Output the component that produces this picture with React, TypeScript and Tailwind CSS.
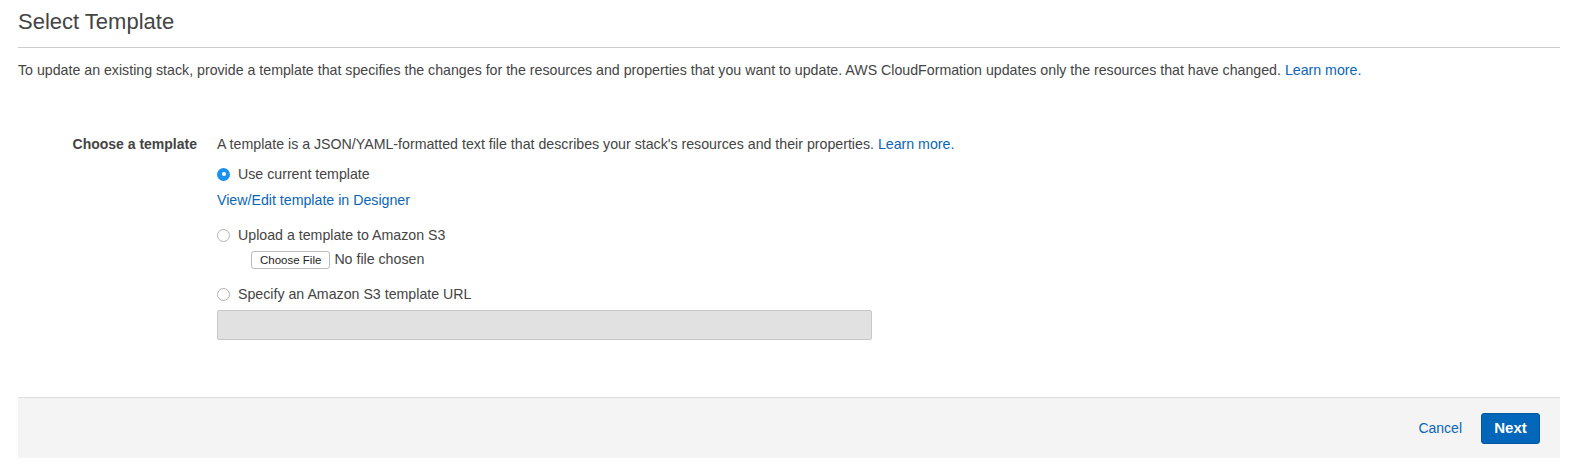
import React from 'react';

const Radio: React.FC<{ checked?: boolean }> = ({ checked }) =>
  checked ? (
    <span className="w-[13px] h-[13px] rounded-full bg-[#1a90f2] flex items-center justify-center shrink-0">
      <span className="w-[4px] h-[4px] rounded-full bg-white" />
    </span>
  ) : (
    <span className="w-[13px] h-[13px] rounded-full border border-[#b4b4b4] bg-white shrink-0" />
  );

export default function App() {
  return (
    <div
      className="w-[1572px] h-[473px] bg-white text-[#444] pl-[18px] pr-[12px] pt-[9px]"
      style={{ fontFamily: '"Liberation Sans", Arial, sans-serif' }}
    >
      {/* Header */}
      <h1 className="text-[22px] leading-[26px] text-[#444] pb-[12px] border-b border-[#ccc]">Select Template</h1>
      <p className="text-[14.2px] leading-[16px] mt-[14px]">
        To update an existing stack, provide a template that specifies the changes for the resources and properties that you want to update. AWS CloudFormation updates only the resources that have changed.{' '}
        <a className="text-[#0a66b9]">Learn more.</a>
      </p>

      {/* Form */}
      <div className="flex mt-[58px] text-[14.2px] leading-[16px]">
        <div className="w-[179px] text-right font-bold text-[14px] text-[#444] shrink-0">Choose a template</div>
        <div className="ml-[20px] flex flex-col">
          <div>
            A template is a JSON/YAML-formatted text file that describes your stack's resources and their properties.{' '}
            <a className="text-[#0a66b9]">Learn more.</a>
          </div>
          <label className="flex items-center gap-[8px] mt-[14px]">
            <Radio checked />
            <span>Use current template</span>
          </label>
          <a className="text-[#0a66b9] mt-[10px]">View/Edit template in Designer</a>
          <label className="flex items-center gap-[8px] mt-[19px]">
            <Radio />
            <span>Upload a template to Amazon S3</span>
          </label>
          <div className="flex items-center ml-[34px] mt-[8px]">
            <button className="h-[18px] px-[8px] text-[11.5px] leading-[16px] text-[#222] bg-white border border-[#bbb] rounded-[3px]">
              Choose File
            </button>
            <span className="ml-[4px] -mt-[3px]">No file chosen</span>
          </div>
          <label className="flex items-center gap-[8px] mt-[17px]">
            <Radio />
            <span>Specify an Amazon S3 template URL</span>
          </label>
          <div className="mt-[8px] w-[655px] h-[30px] bg-[#e1e1e1] border border-[#c8c8c8] rounded-[2px]" />
        </div>
      </div>

      {/* Footer */}
      <div className="mt-[57px] h-[61px] bg-[#f4f4f4] border-t border-[#dedede] flex items-center justify-end pr-[20px] gap-[19px]">
        <a className="text-[14px] text-[#0a66b9]">Cancel</a>
        <button className="w-[59px] h-[31px] rounded-[3px] bg-[#0266ba] border border-[#0057a0] text-white font-bold text-[15px]">
          Next
        </button>
      </div>
    </div>
  );
}
